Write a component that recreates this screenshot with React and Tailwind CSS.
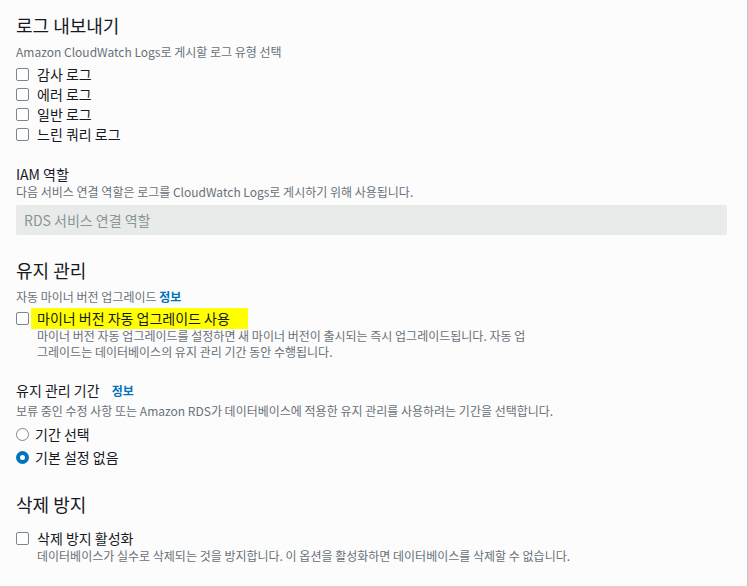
import React from "react";

const font = { fontFamily: '"Noto Sans CJK KR", "Noto Sans", sans-serif' };

function Checkbox() {
  return (
    <span className="inline-block h-[13px] w-[13px] shrink-0 rounded-[2px] border border-[#7d868f] bg-white" />
  );
}

function Radio({ checked }) {
  return checked ? (
    <span className="inline-block h-[13px] w-[13px] shrink-0 rounded-full border-[4px] border-[#0073bb] bg-white" />
  ) : (
    <span className="inline-block h-[13px] w-[13px] shrink-0 rounded-full border border-[#7d868f] bg-white" />
  );
}

function CheckRow({ label }) {
  return (
    <div className="flex h-[20px] items-center gap-[8px]">
      <Checkbox />
      <span className="text-[14px] leading-[20px] text-[#16191f]">{label}</span>
    </div>
  );
}

export default function App() {
  const logTypes = ["감사 로그", "에러 로그", "일반 로그", "느린 쿼리 로그"];

  return (
    <div
      style={font}
      className="h-[586px] w-[748px] overflow-hidden border-r border-[#c4c4c4] bg-[#fcfcfc] pl-[16px] pr-[20px] pt-[11px]"
    >
      <h2 className="text-[18px] leading-[28px] text-[#16191f]">로그 내보내기</h2>
      <p className="mt-[5px] text-[12px] leading-[16px] text-[#687078]">
        Amazon CloudWatch Logs로 게시할 로그 유형 선택
      </p>
      <div className="mt-[4px] flex flex-col">
        {logTypes.map((t) => (
          <CheckRow key={t} label={t} />
        ))}
      </div>

      <p className="mt-[20px] text-[14px] leading-[20px] text-[#16191f]">IAM 역할</p>
      <p className="text-[12px] leading-[16px] text-[#687078]">
        다음 서비스 연결 역할은 로그를 CloudWatch Logs로 게시하기 위해 사용됩니다.
      </p>
      <div className="mt-[5px] flex h-[30px] items-center rounded-[2px] bg-[#e9ebeb] px-[8px] text-[14px] text-[#879596]">
        RDS 서비스 연결 역할
      </div>

      <h2 className="mt-[21px] text-[18px] leading-[28px] text-[#16191f]">유지 관리</h2>
      <p className="mt-[5px] text-[12px] leading-[16px] text-[#687078]">
        자동 마이너 버전 업그레이드 <span className="font-bold text-[#0073bb]">정보</span>
      </p>
      <div className="mt-[3px] flex h-[20px] items-center">
        <Checkbox />
        <span className="ml-[2px] bg-[#ffff00] pl-[6px] pr-[18px] text-[14px] leading-[21px] text-[#16191f]">
          마이너 버전 자동 업그레이드 사용
        </span>
      </div>
      <p className="ml-[21px] w-[495px] break-all text-[12px] leading-[16px] text-[#687078]">
        마이너 버전 자동 업그레이드를 설정하면 새 마이너 버전이 출시되는 즉시 업그레이드됩니다. 자동 업그레이드는 데이터베이스의 유지 관리 기간 동안 수행됩니다.
      </p>

      <p className="mt-[20px] text-[14px] leading-[20px] text-[#16191f]">
        유지 관리 기간 <span className="ml-[9px] text-[12px] font-bold text-[#0073bb]">정보</span>
      </p>
      <p className="mt-[2px] text-[12px] leading-[16px] text-[#687078]">
        보류 중인 수정 사항 또는 Amazon RDS가 데이터베이스에 적용한 유지 관리를 사용하려는 기간을 선택합니다.
      </p>
      <div className="mt-[4px] flex flex-col">
        <div className="flex h-[23px] items-center gap-[6px]">
          <Radio />
          <span className="text-[14px] text-[#16191f]">기간 선택</span>
        </div>
        <div className="flex h-[23px] items-center gap-[6px]">
          <Radio checked />
          <span className="text-[14px] text-[#16191f]">기본 설정 없음</span>
        </div>
      </div>

      <h2 className="mt-[21px] text-[18px] leading-[28px] text-[#16191f]">삭제 방지</h2>
      <div className="mt-[10px]">
        <CheckRow label="삭제 방지 활성화" />
      </div>
      <p className="pl-[21px] text-[12px] leading-[16px] text-[#687078]">
        데이터베이스가 실수로 삭제되는 것을 방지합니다. 이 옵션을 활성화하면 데이터베이스를 삭제할 수 없습니다.
      </p>
    </div>
  );
}
